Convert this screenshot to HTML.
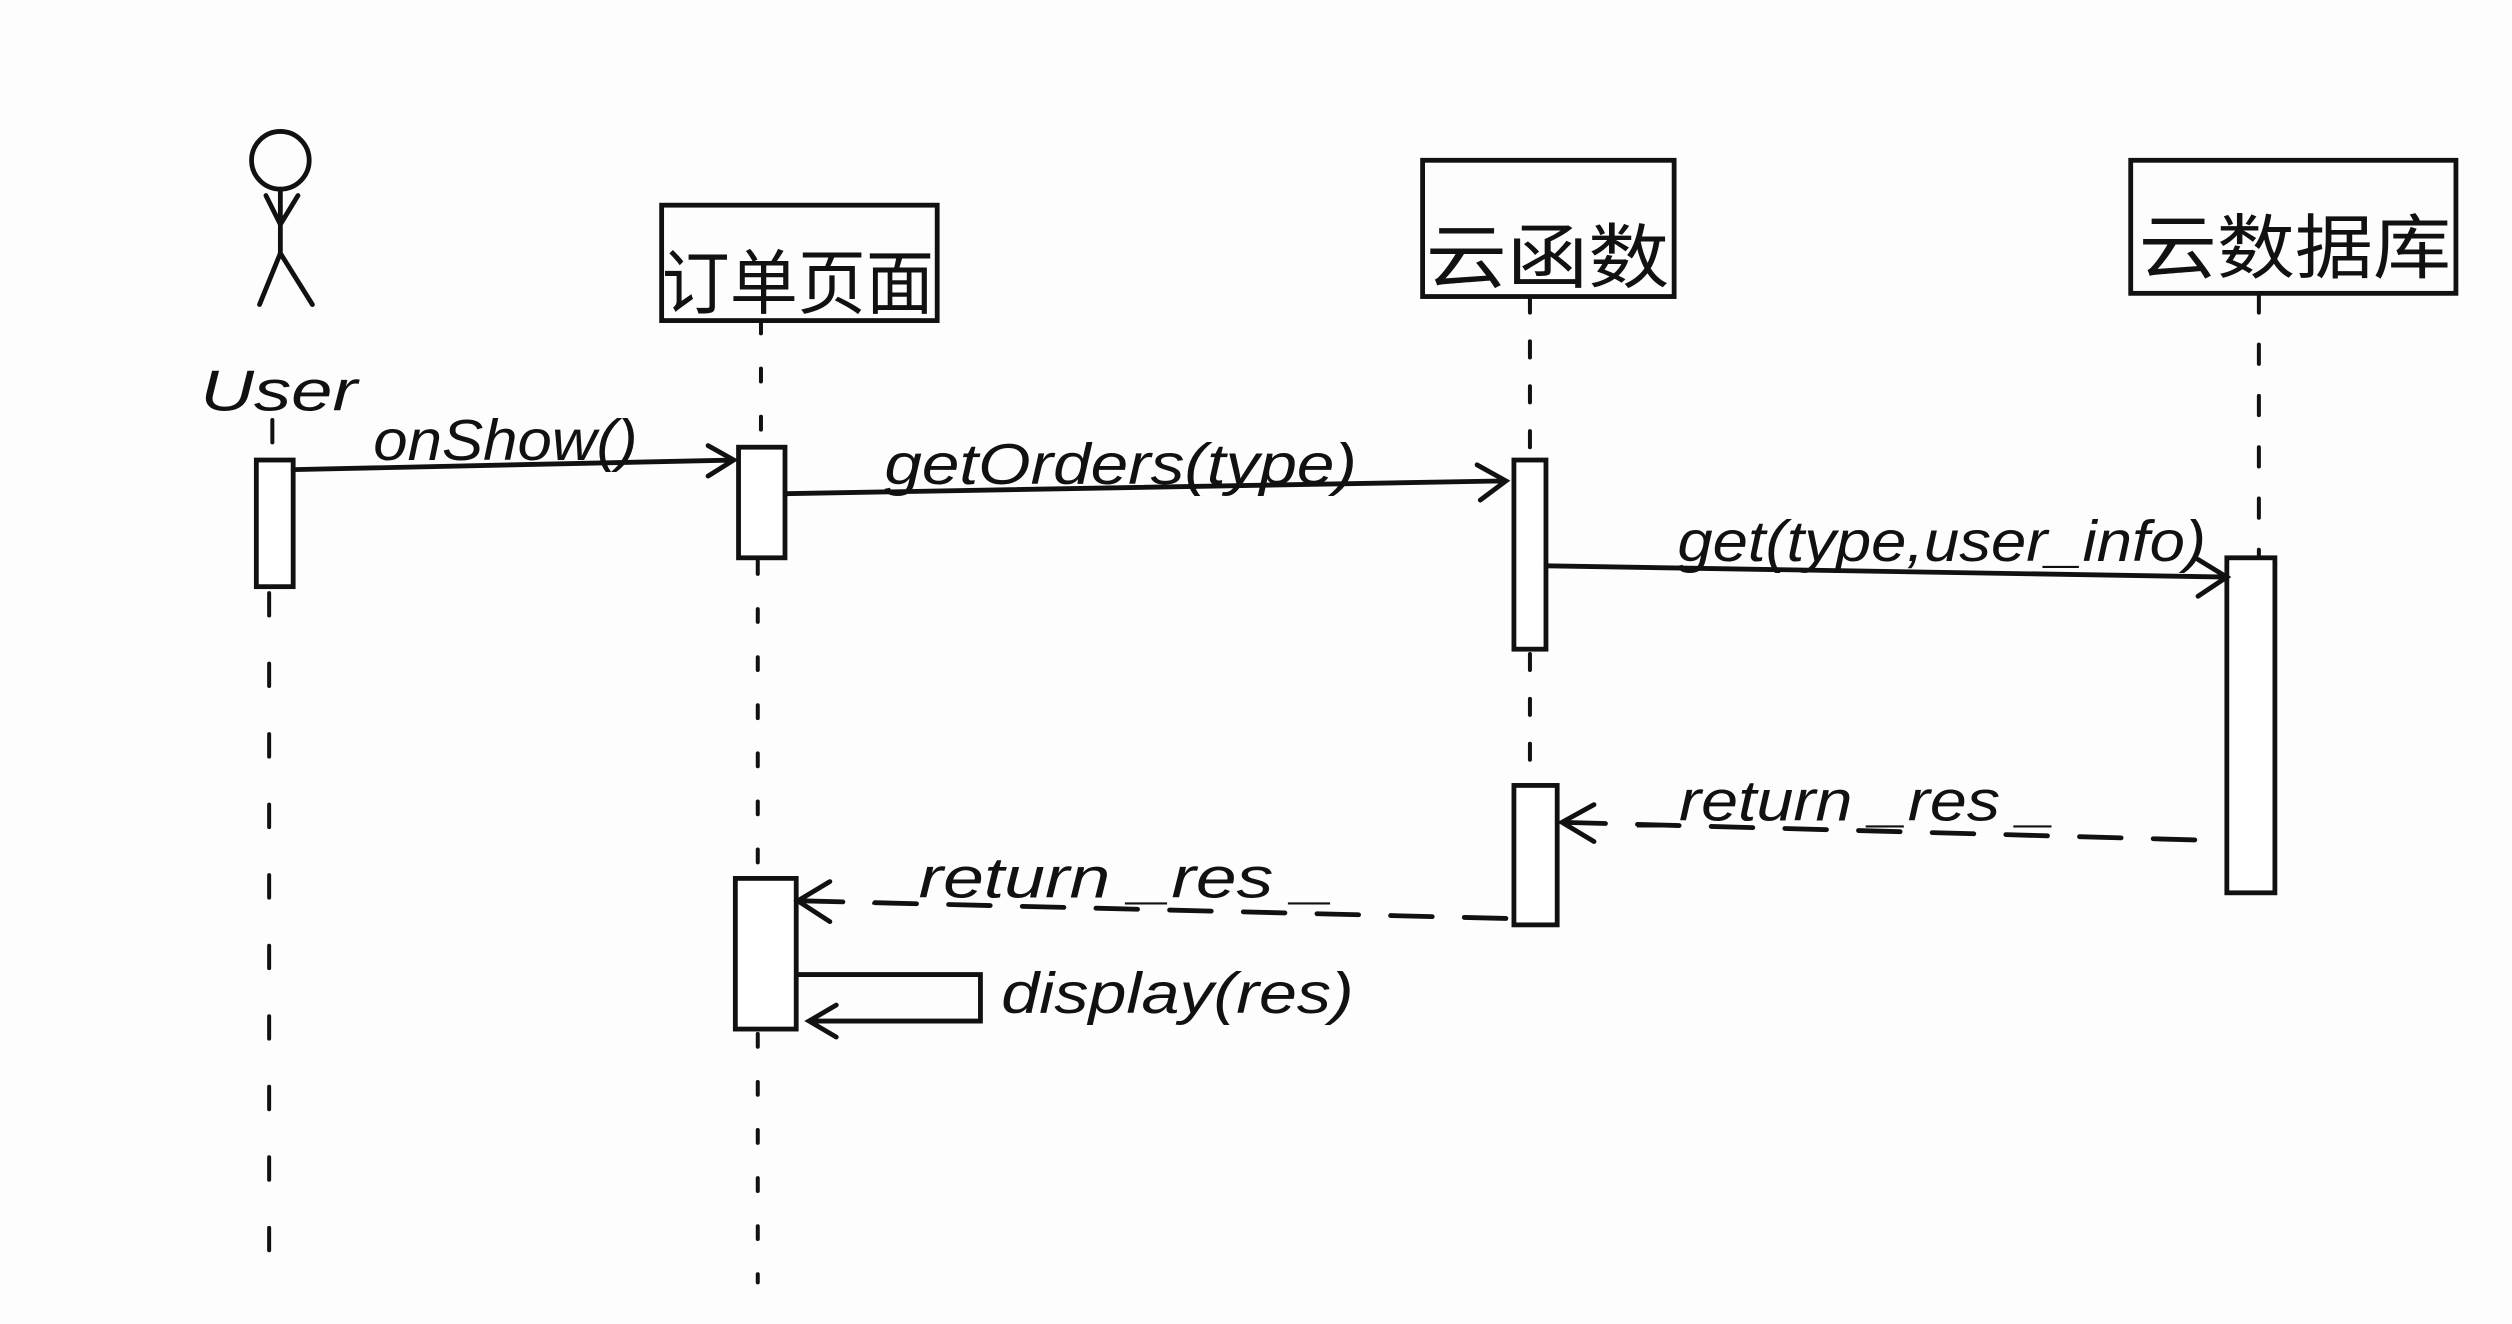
<!DOCTYPE html>
<html><head><meta charset="utf-8"><style>
html,body{margin:0;padding:0;background:#fff;width:2512px;height:1324px;overflow:hidden}
svg{display:block}
text{font-family:"Liberation Sans","Noto Sans CJK SC",sans-serif;fill:#111}
</style></head><body>
<svg width="2512" height="1324" viewBox="0 0 1568 826" preserveAspectRatio="none" xmlns="http://www.w3.org/2000/svg">
<rect width="1568" height="826" fill="#fdfdfd"/>
<g stroke="#111" stroke-width="3" fill="none" stroke-linecap="round">
<!-- actor -->
<circle cx="175" cy="100" r="18"/>
<path d="M175 118 L175 160 M166 122 L175 140 L186 122 M175 158 L162 190 M175 158 L195 190"/>
<!-- lifelines -->
<path d="M170 262 V285 M168 370 V800" stroke-dasharray="14 30" stroke-width="2.5"/>
<path d="M475 200 V278 M473 350 V545 M473 645 V800" stroke-dasharray="8 22" stroke-width="2.5"/>
<path d="M955 185 V285 M955 408 V488" stroke-dasharray="10 18" stroke-width="2.5"/>
<path d="M1410 183 V346" stroke-dasharray="12 20" stroke-width="2.5"/>
<!-- boxes -->
<rect x="413" y="128" width="172" height="72"/>
<rect x="888" y="100" width="157" height="85"/>
<rect x="1330" y="100" width="203" height="83"/>
<!-- activations -->
<rect x="160" y="287" width="23" height="79" fill="#fff"/>
<rect x="461" y="279" width="29" height="69" fill="#fff"/>
<rect x="945" y="287" width="20" height="118" fill="#fff"/>
<rect x="945" y="490" width="27" height="87" fill="#fff"/>
<rect x="1390" y="348" width="30" height="209" fill="#fff"/>
<rect x="459" y="548" width="38" height="94" fill="#fff"/>
<!-- messages -->
<path d="M183 293 L458 287 M442 278 L458 287 L442 297"/>
<path d="M490 308 L940 300 M922 290 L940 300 L924 312"/>
<path d="M965 353 L1390 360 M1372 349 L1390 360 L1372 372"/>
<path d="M1370 524 L975 513" stroke-dasharray="26 20"/>
<path d="M995 502 L975 513 L995 525"/>
<path d="M940 573 L500 562" stroke-dasharray="26 20"/>
<path d="M518 550 L498 562 L518 575"/>
<path d="M498 608 L612 608 L612 637 L505 637 M522 627 L505 637 L522 647"/>
</g>
<g font-size="44">
<text x="413" y="192" textLength="170" lengthAdjust="spacingAndGlyphs">订单页面</text>
<text x="890" y="176" textLength="152" lengthAdjust="spacingAndGlyphs">云函数</text>
<text x="1335" y="170" textLength="195" lengthAdjust="spacingAndGlyphs">云数据库</text>
</g>
<g font-size="36" font-style="italic">
<text x="125" y="256" textLength="98" lengthAdjust="spacingAndGlyphs">User</text>
<text x="233" y="287" textLength="165" lengthAdjust="spacingAndGlyphs">onShow()</text>
<text x="552" y="302" textLength="295" lengthAdjust="spacingAndGlyphs">getOrders(type)</text>
<text x="1047" y="350" textLength="330" lengthAdjust="spacingAndGlyphs">get(type,user_info)</text>
<text x="1025" y="512" textLength="258" lengthAdjust="spacingAndGlyphs">_return  _res _</text>
<text x="548" y="560" textLength="285" lengthAdjust="spacingAndGlyphs">_return  _res  _</text>
<text x="625" y="632" textLength="220" lengthAdjust="spacingAndGlyphs">display(res)</text>
</g>
</svg>
</body></html>
